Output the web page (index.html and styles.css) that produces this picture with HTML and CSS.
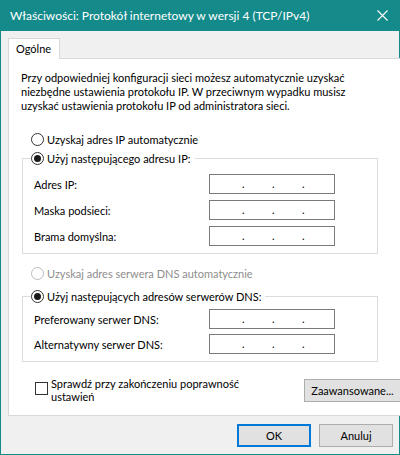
FILE: index.html
```html
<!DOCTYPE html>
<html lang="pl">
<head>
    <meta charset="UTF-8">
    <title>Właściwości: Protokół internetowy w wersji 4 (TCP/IPv4)</title>
    <link rel="stylesheet" href="styles.css">
</head>
<body>
    <div class="window">
        <div class="titlebar">
            <span class="title">Właściwości: Protokół internetowy w wersji 4 (TCP/IPv4)</span>
            <span class="close">
                <svg width="11" height="11" viewBox="0 0 11 11">
                    <path d="M0.5 0.5 L10.5 10.5 M10.5 0.5 L0.5 10.5" stroke="#ffffff" stroke-width="1.1" fill="none"/>
                </svg>
            </span>
        </div>

        <div class="body">
            <div class="tabs">
                <div class="tab">Ogólne</div>
            </div>

            <div class="panel">
                <p class="intro">Przy odpowiedniej konfiguracji sieci możesz automatycznie uzyskać<br>niezbędne ustawienia protokołu IP. W przeciwnym wypadku musisz<br>uzyskać ustawienia protokołu IP od administratora sieci.</p>

                <div class="option first">
                    <span class="radio"></span>Uzyskaj adres IP automatycznie
                </div>

                <fieldset class="group ip-group">
                    <legend><span class="option"><span class="radio checked"></span>Użyj następującego adresu IP:</span></legend>
                    <div class="fields">
                        <span class="label">Adres IP:</span>
                        <div class="ipbox"><span>.</span><span>.</span><span>.</span></div>
                        <span class="label">Maska podsieci:</span>
                        <div class="ipbox"><span>.</span><span>.</span><span>.</span></div>
                        <span class="label">Brama domyślna:</span>
                        <div class="ipbox"><span>.</span><span>.</span><span>.</span></div>
                    </div>
                </fieldset>

                <div class="option disabled dns-auto">
                    <span class="radio"></span>Uzyskaj adres serwera DNS automatycznie
                </div>

                <fieldset class="group dns-group">
                    <legend><span class="option"><span class="radio checked"></span>Użyj następujących adresów serwerów DNS:</span></legend>
                    <div class="fields">
                        <span class="label">Preferowany serwer DNS:</span>
                        <div class="ipbox"><span>.</span><span>.</span><span>.</span></div>
                        <span class="label">Alternatywny serwer DNS:</span>
                        <div class="ipbox"><span>.</span><span>.</span><span>.</span></div>
                    </div>
                </fieldset>

                <div class="bottom-row">
                    <div class="check">
                        <span class="box"></span>
                        <span>Sprawdź przy zakończeniu poprawność<br>ustawień</span>
                    </div>
                    <button class="btn advanced">Zaawansowane...</button>
                </div>
            </div>

            <div class="footer">
                <button class="btn default">OK</button>
                <button class="btn">Anuluj</button>
            </div>
        </div>
    </div>
</body>
</html>
```

FILE: styles.css
```css
body {
    margin: 0;
    font-family: Lato, 'Noto Sans', sans-serif;
    font-size: 11px;
    color: #000000;
}
.window {
    width: 400px;
    height: 455px;
    box-sizing: border-box;
    border: 1px solid #148a8b;
    border-top: none;
    background: #f0f0f0;
}
.titlebar {
    height: 31px;
    background: #148a8b;
    color: #ffffff;
    display: flex;
    align-items: center;
    padding-left: 9px;
    padding-right: 11px;
}
.title {
    flex: 1;
    white-space: nowrap;
    font-size: 12px;
    padding-bottom: 1px;
}
.close {
    display: flex;
    margin-bottom: 1px;
}
.body {
    padding: 7px 0 0 7px;
}
.tabs {
    display: flex;
}
.tab {
    position: relative;
    height: 20px;
    width: 43px;
    line-height: 19px;
    padding-left: 7px;
    background: #ffffff;
    border: 1px solid #d9d9d9;
    border-bottom: none;
    margin-bottom: -1px;
    box-sizing: content-box;
}
.panel {
    width: 381px;
    height: 344px;
    background: #ffffff;
    border: 1px solid #d9d9d9;
    padding: 12px 12px 0 12px;
    box-sizing: content-box;
}
.intro {
    margin: 0;
    line-height: 14px;
    white-space: nowrap;
}
.option {
    display: flex;
    align-items: center;
    height: 19px;
    white-space: nowrap;
}
.option.first {
    margin-top: 17px;
    margin-left: 10px;
}
.radio {
    width: 11px;
    height: 11px;
    border: 1px solid #333333;
    border-radius: 50%;
    margin-right: 3px;
    display: flex;
    align-items: center;
    justify-content: center;
    flex-shrink: 0;
}
.radio.checked::after {
    content: "";
    width: 7px;
    height: 7px;
    border-radius: 50%;
    background: #1a1a1a;
}
.option.disabled {
    color: #8d8d8d;
}
.option.disabled .radio {
    border-color: #bcbcbc;
}
.group {
    margin: 0 0 0 1px;
    padding: 0;
    border: 1px solid #dcdcdc;
    width: 354px;
}
.group legend {
    padding: 0 4px 0 0;
    margin-left: 8px;
}
.fields {
    display: grid;
    grid-template-columns: 175px 126px;
    align-items: center;
    padding-left: 11px;
}
.ip-group .fields {
    row-gap: 6px;
    padding-top: 6px;
    padding-bottom: 7px;
}
.dns-group .fields {
    row-gap: 5px;
    padding-top: 3px;
    padding-bottom: 7px;
}
.label {
    white-space: nowrap;
}
.ipbox {
    height: 18px;
    border: 1px solid #7a7a7a;
    display: flex;
    gap: 27px;
    padding-left: 32px;
    line-height: 18px;
}
.ipbox span {
    width: 3px;
}
.dns-auto {
    margin-top: 10px;
    margin-left: 10px;
}
.dns-group {
    margin-top: 4px;
}
.bottom-row {
    display: flex;
    justify-content: space-between;
    align-items: flex-start;
    margin-top: 15px;
}
.check {
    display: flex;
    align-items: flex-start;
    margin-left: 14px;
    line-height: 13px;
    white-space: nowrap;
}
.box {
    width: 11px;
    height: 11px;
    border: 1px solid #333333;
    margin-top: 5px;
    margin-right: 3px;
}
.btn {
    font-family: Lato, 'Noto Sans', sans-serif;
    font-size: 11px;
    color: #000000;
    background: #e1e1e1;
    border: 1px solid #adadad;
    padding: 0;
    height: 23px;
    width: 74px;
}
.btn.advanced {
    width: 97px;
    height: 23px;
    margin-top: 2px;
    margin-right: 1px;
}
.btn.default {
    border: 2px solid #0078d7;
}
.footer {
    display: flex;
    justify-content: flex-end;
    gap: 8px;
    margin-top: 8px;
    padding-right: 6px;
}
```
